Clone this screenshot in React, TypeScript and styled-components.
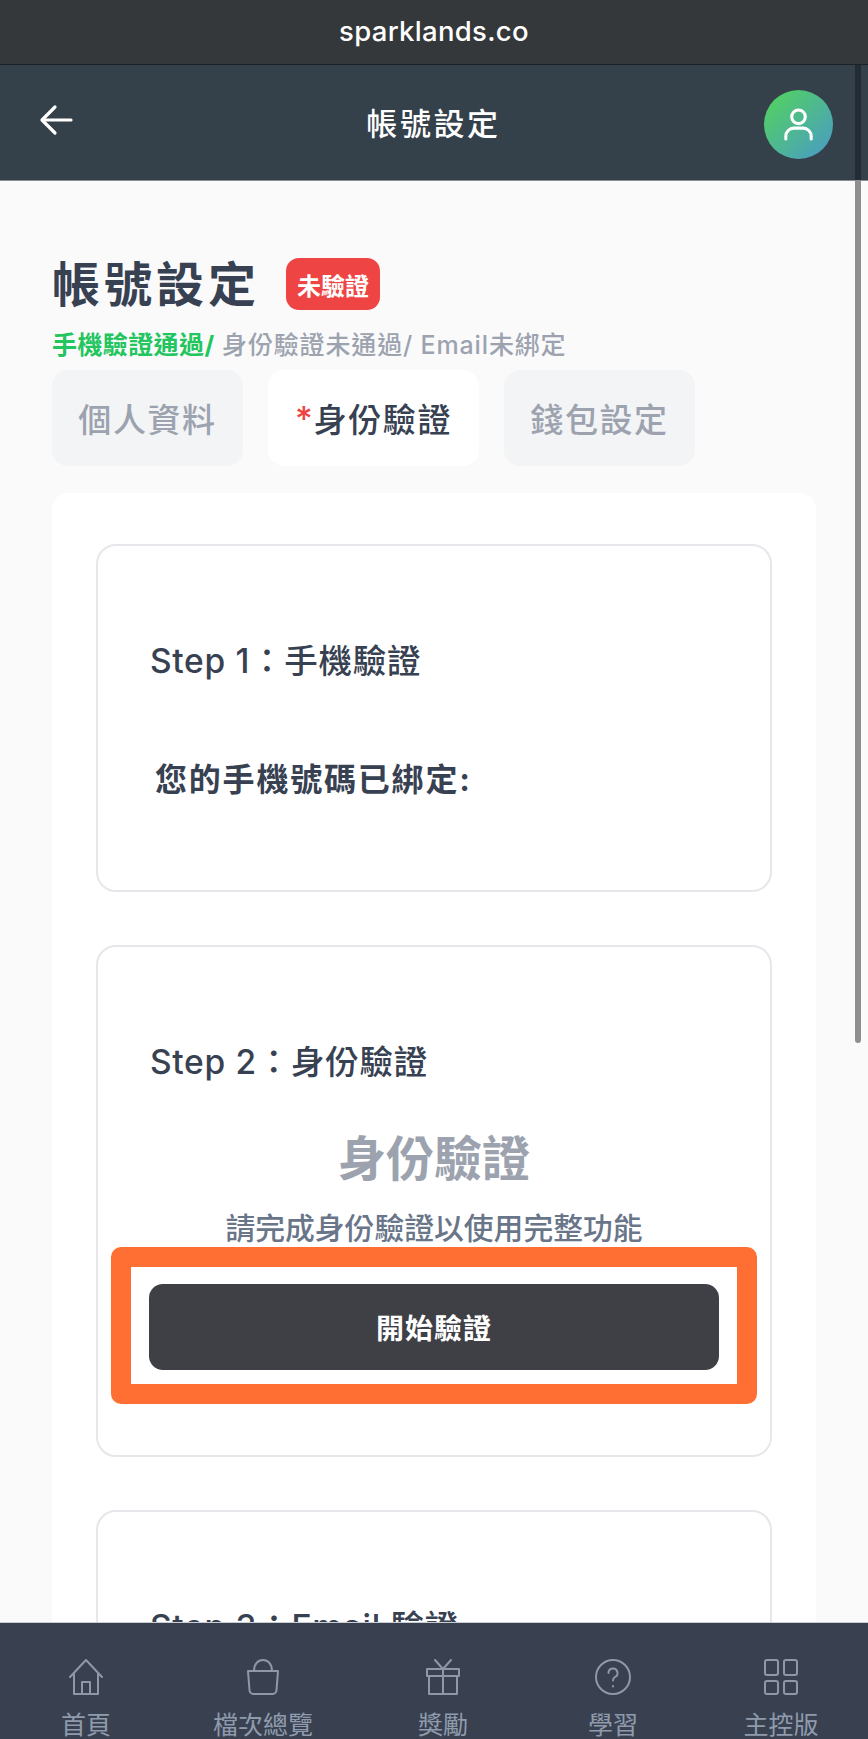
import React from "react";
import styled, { createGlobalStyle } from "styled-components";

const Global = createGlobalStyle`
  html, body { margin: 0; padding: 0; background: #fafafb; }
  * { box-sizing: border-box; }
  body { font-family: Inter, "Noto Sans CJK TC", "Noto Sans", sans-serif; }
`;
const Page = styled.div`
  position: relative;
  width: 868px;
  height: 1739px;
  overflow: hidden;
  background: #fafafb;
  display: flex;
  flex-direction: column;
`;
const BrowserBar = styled.div`
  height: 65px;
  flex: none;
  background: #35383a;
  border-bottom: 1px solid #1c2126;
  color: #fff;
  font-size: 27.5px;
  font-weight: 500;
  letter-spacing: 0.3px;
  display: flex;
  align-items: center;
  justify-content: center;
  padding-bottom: 2px;
`;
const Header = styled.header`
  height: 116px;
  flex: none;
  background: #34404a;
  border-bottom: 1px solid #8a8f94;
  display: flex;
  align-items: center;
  justify-content: space-between;
  padding: 1px 35px 0 39px;
  position: relative;
`;
const BackIcon = styled.svg`
  width: 34px;
  height: 32px;
  margin-top: -7px;
`;
const HeaderTitle = styled.h1`
  margin: 2px 0 0 30px;
  color: #fff;
  font-size: 31px;
  line-height: 40px;
  font-weight: 500;
  letter-spacing: 2.6px;
`;
const Avatar = styled.div`
  width: 69px;
  height: 69px;
  margin-top: 2px;
  border-radius: 50%;
  background: linear-gradient(135deg, #52d063 10%, #4a9cc4 95%);
  display: flex;
  align-items: center;
  justify-content: center;
`;
const ScrollThumb = styled.div`
  position: absolute;
  left: 855px;
  top: 65px;
  width: 6px;
  height: 978px;
  background: linear-gradient(#232b35 0, #232b35 115px, #8f8f8f 115px);
  border-radius: 0 0 3px 3px;
`;
const Content = styled.main`
  flex: 1;
  padding: 77px 52px 0;
`;
const TitleRow = styled.div`
  display: flex;
  align-items: center;
  gap: 26px;
  height: 52px;
`;
const PageTitle = styled.h2`
  margin: 2px 0 0;
  font-size: 48px;
  line-height: 52px;
  font-weight: 700;
  letter-spacing: 4px;
  color: #374151;
`;
const Badge = styled.span`
  width: 94px;
  height: 52px;
  border-radius: 13px;
  background: #ef4444;
  color: #fff;
  font-size: 24px;
  font-weight: 700;
  display: flex;
  align-items: center;
  justify-content: center;
`;
const StatusLine = styled.p`
  margin: 21px 0 11px;
  font-size: 25px;
  line-height: 28px;
  font-weight: 500;
  letter-spacing: 0.85px;
  color: #9ca3af;
  white-space: pre;
`;
const StatusOk = styled.span`
  color: #22c55e;
  font-weight: 700;
  letter-spacing: 0.4px;
`;
const Tabs = styled.div`
  display: flex;
  gap: 25px;
  margin-bottom: 27px;
`;
const Tab = styled.div<{ $active?: boolean }>`
  height: 96px;
  width: ${(p) => (p.$active ? "211px" : "191px")};
  border-radius: 16px;
  background: ${(p) => (p.$active ? "#ffffff" : "#f3f4f6")};
  color: ${(p) => (p.$active ? "#374151" : "#9ca3af")};
  font-size: 33px;
  font-weight: 500;
  letter-spacing: 1.6px;
  display: flex;
  align-items: center;
  justify-content: center;
`;
const Star = styled.span`
  color: #ef4444;
  font-size: 34px;
  letter-spacing: 1px;
`;
const Panel = styled.section`
  width: 764px;
  background: #fff;
  border-radius: 16px;
  padding: 51px 44px 0;
  display: flex;
  flex-direction: column;
  gap: 53px;
`;
const StepCard = styled.div<{ $h: number }>`
  height: ${(p) => p.$h}px;
  border: 2px solid #e5e7eb;
  border-radius: 20px;
  padding: 95px 52px 0;
  display: flex;
  flex-direction: column;
  flex: none;
`;
const StepTitle = styled.h3`
  margin: 0;
  font-size: 33.5px;
  line-height: 40px;
  font-weight: 500;
  letter-spacing: 0.7px;
  color: #374151;
`;
const StepNote = styled.p`
  margin: 79px 0 0 5px;
  font-size: 32px;
  line-height: 40px;
  font-weight: 700;
  letter-spacing: 1.8px;
  color: #374151;
`;
const VerifyTitle = styled.div`
  margin-top: 45px;
  text-align: center;
  font-size: 48px;
  line-height: 64px;
  font-weight: 700;
  color: #9ca3af;
`;
const VerifyText = styled.p`
  margin: 19px 0 0;
  text-align: center;
  font-size: 29.8px;
  line-height: 36px;
  font-weight: 500;
  color: #697589;
  white-space: nowrap;
`;
const Highlight = styled.div`
  margin: 1px -39px 0;
  height: 157px;
  border: solid #ff6f33;
  border-width: 20px;
  border-radius: 10px;
  background: #fff;
  padding: 17px 18px;
`;
const StartButton = styled.button`
  display: block;
  width: 100%;
  height: 86px;
  border: 0;
  border-radius: 14px;
  background: #3f4046;
  color: #fff;
  font: 700 28px Inter, "Noto Sans CJK TC", sans-serif;
  letter-spacing: 1px;
`;
const BottomNav = styled.nav`
  position: absolute;
  left: 0;
  right: 0;
  bottom: 0;
  height: 117px;
  background: #394150;
  border-top: 1px solid #c9ccd1;
  display: grid;
  grid-template-columns: 172px 182px 178px 162px 174px;
  padding-top: 36px;
`;
const NavItem = styled.div`
  display: flex;
  flex-direction: column;
  align-items: center;
  color: #8f9bad;
`;
const NavIcon = styled.svg`
  width: 36px;
  height: 36px;
  fill: none;
  stroke: #8f98a6;
  stroke-width: 2;
  stroke-linejoin: round;
  stroke-linecap: round;
`;
const NavLabel = styled.span`
  margin-top: 15px;
  font-size: 25px;
  line-height: 30px;
  font-weight: 400;
  white-space: nowrap;
`;

const navItems = [
  {
    label: "首頁",
    icon: (
      <>
        <path d="M2 18 18 1l16 17" />
        <path d="M6 15v20h24V15" />
        <path d="M14 35V23h8v12" />
      </>
    ),
  },
  {
    label: "檔次總覽",
    icon: (
      <>
        <path d="M3 12h30l-1.5 19a4 4 0 0 1-4 4h-19a4 4 0 0 1-4-4z" />
        <path d="M9 12c0-7 4-11 9-11s9 4 9 11" />
      </>
    ),
  },
  {
    label: "獎勵",
    icon: (
      <>
        <path d="M2 10h32v7H2z" />
        <path d="M4 17h28v18H4z" />
        <path d="M18 10v25" />
        <path d="M10 1l8 9 8-9" />
      </>
    ),
  },
  {
    label: "學習",
    icon: (
      <>
        <circle cx="18" cy="18" r="17" />
        <path d="M13.5 14a4.5 4.5 0 1 1 6.5 4c-1.4.8-2 1.6-2 3.5" />
        <path d="M18 27v.5" />
      </>
    ),
  },
  {
    label: "主控版",
    icon: (
      <>
        <rect x="2" y="1" width="13" height="15" rx="2" />
        <rect x="21" y="1" width="13" height="15" rx="2" />
        <rect x="2" y="22" width="13" height="13" rx="2" />
        <rect x="21" y="22" width="13" height="13" rx="2" />
      </>
    ),
  },
];

export default function App() {
  return (
    <Page>
      <Global />
      <BrowserBar>sparklands.co</BrowserBar>
      <Header>
        <BackIcon viewBox="0 0 34 32" fill="none" stroke="#fff" strokeWidth="3.2" strokeLinecap="round" strokeLinejoin="round">
          <path d="M32 16H4" />
          <path d="M16 3 3 16l13 13" />
        </BackIcon>
        <HeaderTitle>帳號設定</HeaderTitle>
        <Avatar>
          <svg width="29" height="33" viewBox="0 0 32 36" fill="none" stroke="#fff" strokeWidth="3.4" strokeLinecap="round">
            <circle cx="16" cy="9.5" r="7.5" />
            <path d="M2 34v-3a9 9 0 0 1 9-9h10a9 9 0 0 1 9 9v3" />
          </svg>
        </Avatar>
      </Header>
      <ScrollThumb />
      <Content>
        <TitleRow>
          <PageTitle>帳號設定</PageTitle>
          <Badge>未驗證</Badge>
        </TitleRow>
        <StatusLine>
          <StatusOk>手機驗證通過/</StatusOk> 身份驗證未通過/ Email未綁定
        </StatusLine>
        <Tabs>
          <Tab>個人資料</Tab>
          <Tab $active>
            <Star>*</Star>身份驗證
          </Tab>
          <Tab>錢包設定</Tab>
        </Tabs>
        <Panel>
          <StepCard $h={348}>
            <StepTitle>Step 1：手機驗證</StepTitle>
            <StepNote>您的手機號碼已綁定:</StepNote>
          </StepCard>
          <StepCard $h={512}>
            <StepTitle>Step 2：身份驗證</StepTitle>
            <VerifyTitle>身份驗證</VerifyTitle>
            <VerifyText>請完成身份驗證以使用完整功能</VerifyText>
            <Highlight>
              <StartButton>開始驗證</StartButton>
            </Highlight>
          </StepCard>
          <StepCard $h={400}>
            <StepTitle>Step 3：Email 驗證</StepTitle>
          </StepCard>
        </Panel>
      </Content>
      <BottomNav>
        {navItems.map((n) => (
          <NavItem key={n.label}>
            <NavIcon viewBox="0 0 36 36">{n.icon}</NavIcon>
            <NavLabel>{n.label}</NavLabel>
          </NavItem>
        ))}
      </BottomNav>
    </Page>
  );
}
